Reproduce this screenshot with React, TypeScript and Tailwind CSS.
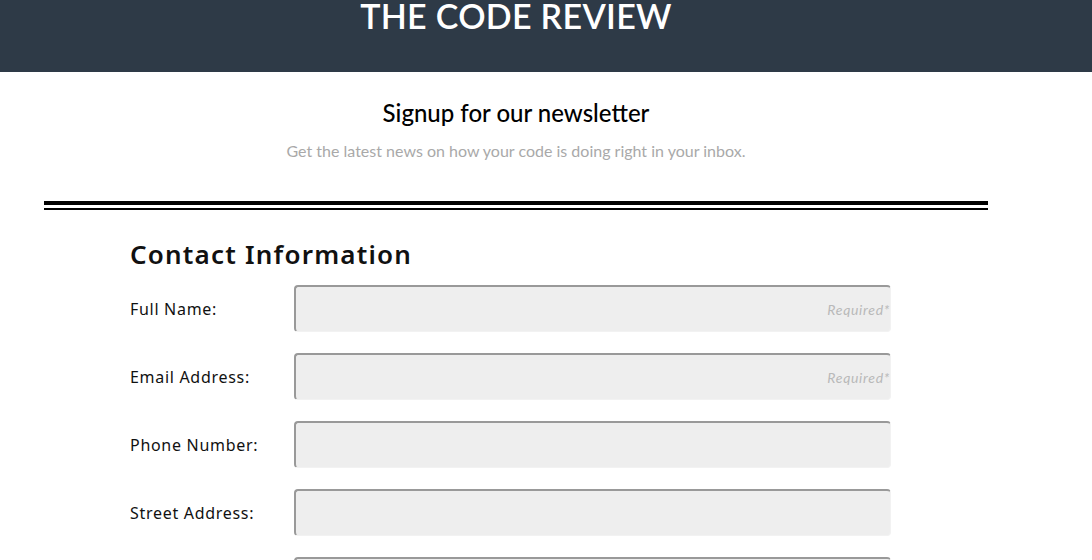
import React from "react";

const rows = [
  { label: "Full Name:", required: true },
  { label: "Email Address:", required: true },
  { label: "Phone Number:", required: false },
  { label: "Street Address:", required: false },
  { label: "City:", required: false },
];

export default function App() {
  return (
    <div className="w-[1092px] h-[560px] overflow-hidden bg-white" style={{ fontFamily: "'Noto Sans', sans-serif" }}>
      <header className="h-[72px] bg-[#2e3a47]">
        <div className="w-[1032px] flex justify-center">
          <h1 className="text-white text-[34px] leading-none -mt-[1px] tracking-[0.3px] font-['Lato',sans-serif] font-semibold">
            THE CODE REVIEW
          </h1>
        </div>
      </header>
      <div className="w-[1032px]">
        <div className="flex flex-col items-center pt-[25px]">
          <h2 className="text-black text-[24px] leading-[32px] font-['Lato',sans-serif] font-medium">Signup for our newsletter</h2>
          <p className="text-[#a9a9a9] text-[16px] leading-[20px] mt-[12px] font-['Lato',sans-serif]">
            Get the latest news on how your code is doing right in your inbox.
          </p>
        </div>
        <div className="ml-[44px] w-[944px] mt-[40px]">
          <div className="h-[4px] bg-black" />
          <div className="h-[3px]" />
          <div className="h-[2px] bg-black" />
        </div>
        <div className="ml-[130px] w-[761px] mt-[28px]">
          <h3 className="text-[26px] leading-[32px] font-semibold tracking-[1.2px] text-[#111]">Contact Information</h3>
          <div className="mt-[15px] flex flex-col gap-[21px]">
            {rows.map((r) => (
              <div key={r.label} className="flex items-center">
                <label className="w-[164px] text-[16px] tracking-[0.7px] text-[#111]">{r.label}</label>
                <div className="flex-1 h-[47px] rounded-[4px] bg-[#eeeeee] border-t-2 border-l-2 border-t-[#999] border-l-[#999] border-r border-b border-r-[#f2f2f2] border-b-[#f2f2f2] flex items-center justify-end">
                  {r.required && (
                    <span className="italic text-[14px] text-[#b9b9b9] font-['Lato',sans-serif] tracking-[0.7px]">Required*</span>
                  )}
                </div>
              </div>
            ))}
          </div>
        </div>
      </div>
    </div>
  );
}
